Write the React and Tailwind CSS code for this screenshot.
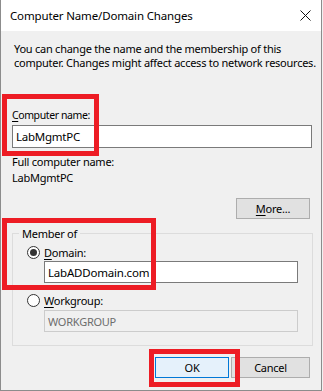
import React from 'react';

function Radio({ checked }) {
  return (
    <span className="flex h-[13px] w-[13px] shrink-0 items-center justify-center rounded-full border border-[#333333] bg-white">
      {checked && <span className="h-[7px] w-[7px] rounded-full bg-[#333333]" />}
    </span>
  );
}

function Key({ children }) {
  return <span className="underline underline-offset-2">{children}</span>;
}

export default function App() {
  return (
    <div className="relative h-[391px] w-[323px] overflow-hidden whitespace-nowrap bg-[#f0f0f0] font-['Noto_Sans',sans-serif] text-[11px] leading-[15px] tracking-[-0.25px] text-black">
      <div className="h-[391px] w-[322px] border-b border-l border-r border-[#8c8c8c]">
        {/* title bar */}
        <div className="flex h-[31px] items-center justify-between bg-white pl-[9px] pr-[9px]">
          <span className="text-[11.5px] tracking-[-0.15px]">Computer Name/Domain Changes</span>
          <svg width="11" height="11" viewBox="0 0 11 11" className="mr-[1px]">
            <path d="M0.5 0.5 L10.5 10.5 M10.5 0.5 L0.5 10.5" stroke="#111" strokeWidth="1" />
          </svg>
        </div>

        <div className="px-[11px] pt-[11px]">
          <p className="pl-[2px] leading-[14px]">
            You can change the name and the membership of this
            <br />
            computer. Changes might affect access to network resources.
          </p>

          <div className="mt-[38px] text-[10.5px] tracking-[-0.4px]">
            <Key>C</Key>omputer name:
          </div>
          <div className="mt-[2px] flex h-[23px] w-[300px] items-center border border-[#7a7a7a] bg-white px-[3px] text-[11.5px]">
            LabMgmtPC
          </div>

          <div className="mt-[6px] leading-[16px]">Full computer name:</div>
          <div className="leading-[16px]">LabMgmtPC</div>

          <div className="mt-[12px] flex justify-end">
            <button className="flex h-[21px] w-[74px] items-center justify-center border border-[#adadad] bg-[#e1e1e1]">
              <Key>M</Key>ore...
            </button>
          </div>

          {/* Member of group */}
          <div className="relative mt-[14px] h-[113px] w-[301px] border border-[#dcdcdc] pl-[14px] pr-[14px] pt-[11px]">
            <span className="absolute left-[6px] top-[-8px] bg-[#f0f0f0] px-[3px]">Member of</span>
            <div className="flex items-center gap-[4px]">
              <Radio checked />
              <span>
                <Key>D</Key>omain:
              </span>
            </div>
            <div className="ml-[17px] mt-[1px] flex h-[22px] w-[254px] items-center border border-[#7a7a7a] bg-white px-[3px] text-[11.5px] tracking-[-0.2px]">
              LabADDomain.com
            </div>
            <div className="mt-[10px] flex items-center gap-[4px]">
              <Radio />
              <span>
                <Key>W</Key>orkgroup:
              </span>
            </div>
            <div className="ml-[17px] mt-[2px] flex h-[22px] w-[254px] items-center border border-[#cccccc] bg-[#f0f0f0] px-[3px] text-[#6d6d6d]">
              WORKGROUP
            </div>
          </div>

          <div className="mt-[11px] flex justify-end gap-[2px]">
            <button className="flex h-[21px] w-[74px] items-center justify-center border border-[#0078d7] bg-[#e5f1fb]">
              OK
            </button>
            <button className="flex h-[21px] w-[79px] items-center justify-center border border-[#adadad] bg-[#e1e1e1]">
              Cancel
            </button>
          </div>
        </div>
      </div>

      {/* highlight boxes */}
      <div className="absolute left-[2px] top-[94px] h-[62px] w-[97px] border-[5px] border-[#ed1c24]" />
      <div className="absolute left-[2px] top-[218px] h-[72px] w-[154px] border-[5px] border-[#ed1c24]" />
      <div className="absolute left-[149px] top-[349px] h-[38px] w-[91px] border-[5px] border-[#ed1c24]" />
    </div>
  );
}
